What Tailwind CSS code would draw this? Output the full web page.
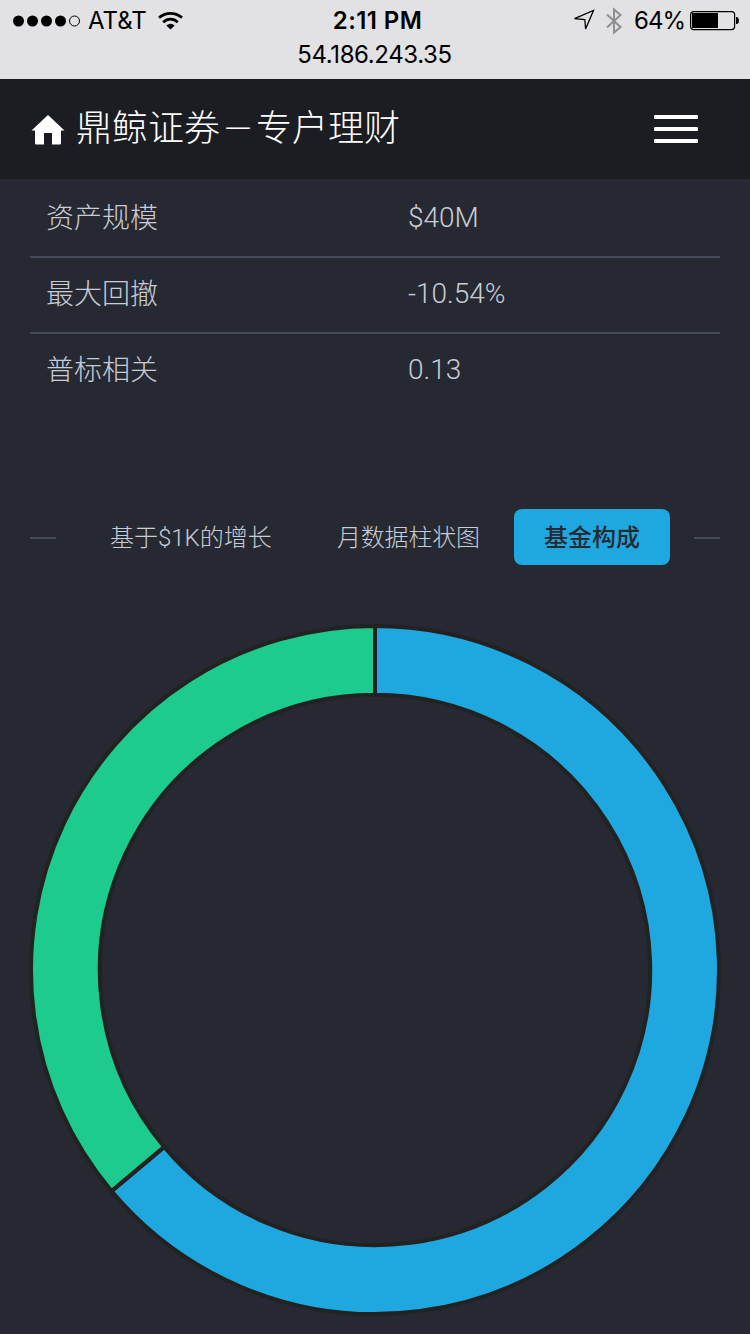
<!DOCTYPE html>
<html lang="zh-CN">
<head>
<meta charset="utf-8">
<title>鼎鲸证券－专户理财</title>
<script src="https://cdn.jsdelivr.net/npm/@tailwindcss/browser@4"></script>
</head>
<body class="w-[750px] h-[1334px] overflow-hidden bg-[#262932] font-['Roboto','Noto_Sans_CJK_SC',sans-serif] font-light text-[#c8ccd6]">
<div class="h-[79px] bg-[#e2e2e4] text-black font-['Inter',sans-serif] font-normal text-[24px]">
  <div class="grid grid-cols-[1fr_auto_1fr] items-center h-[41px] pl-[13px] pr-[11px]">
    <div class="flex items-center">
      <svg class="mr-[7px]" width="68" height="12" viewBox="0 0 68 12"><circle cx="5.5" cy="6" r="5.5"/><circle cx="19.5" cy="6" r="5.5"/><circle cx="33.5" cy="6" r="5.5"/><circle cx="47.5" cy="6" r="5.5"/><circle cx="61.5" cy="6" r="5" fill="none" stroke="#000"/></svg>
      <span class="w-[58px] pt-px leading-10 whitespace-nowrap">AT&amp;T</span>
      <svg class="ml-3" width="26" height="18" viewBox="0 0 26 18" fill="none" stroke="#000" stroke-width="2.8"><path d="M1 5.6Q6.500 1.400 12.500 1.400T24 5.600"/><path d="M5.200 10.200Q8.500 7.200 12.500 7.200T19.800 10.200"/><path d="M8.300 13.400Q12.500 10.200 16.700 13.400L12.500 17.600Z" fill="#000" stroke="none"/></svg>
    </div>
    <div class="font-semibold pt-px pl-[3px] leading-10 tracking-[0.4px] whitespace-nowrap">2:11 PM</div>
    <div class="flex items-center justify-end">
      <svg class="mb-[2px]" width="22" height="22" viewBox="0 0 22 22" fill="none" stroke="#000" stroke-width="1.300"><path d="M.5 9.600L19.500 1.500L11.600 20L10.800 10.500Z"/></svg>
      <svg class="ml-[9px]" width="18" height="28" viewBox="0 0 18 28" fill="none" stroke="#8f8f91" stroke-width="2"><path d="M2 7.500L15.500 20L9 25.500V2.500L15.500 8L2 20.500"/></svg>
      <span class="ml-[11px] w-[51px] pt-px leading-10 tracking-[-1px] whitespace-nowrap">64%</span>
      <svg class="ml-[5px]" width="49" height="20" viewBox="0 0 49 20"><rect x=".6" y=".6" width="44" height="18" rx="3" fill="none" stroke="#000" stroke-width="1.200"/><path d="M2 2H28V17H2Z"/><path d="M46 6H47Q49 6.500 49 9.500T47 13H46Z"/></svg>
    </div>
  </div>
  <div class="text-center leading-[28px] tracking-[-0.4px] pr-px">54.186.243.35</div>
</div>
<header class="h-[100px] bg-[#1c1d22] flex items-center justify-between pl-[31px] pr-[52px] text-white">
  <div class="flex items-center">
    <svg class="mt-px mr-[11px]" width="34" height="30" viewBox="0 0 34 30" fill="#fff"><path d="M17 0L33.500 15.500H30V28Q30 29.500 28.500 29.500H21V18H13V29.500H5.500Q4 29.500 4 28V15.500H.5Z"/></svg>
    <span class="flex text-[36px] leading-[52px] whitespace-nowrap">鼎鲸证券<span class="w-9 text-center text-[32px]">－</span>专户理财</span>
  </div>
  <div class="flex flex-col gap-2 w-11"><i class="h-1 bg-white rounded-[1px]"></i><i class="h-1 bg-white rounded-[1px]"></i><i class="h-1 bg-white rounded-[1px]"></i></div>
</header>
<main class="px-[30px]">
  <div class="text-[28px]">
    <div class="grid grid-cols-[362px_1fr] h-[79px] pl-4 items-center border-b-2 border-[#454958]"><span class="pt-[3px]">资产规模</span><span class="pt-px">$40M</span></div>
    <div class="grid grid-cols-[362px_1fr] h-[76px] pl-4 pb-[3px] items-center border-b-2 border-[#454958]"><span class="pt-[2px]">最大回撤</span><span>-10.54%</span></div>
    <div class="grid grid-cols-[362px_1fr] h-[74px] pl-4 pb-[3px] items-center"><span class="pt-[2px]">普标相关</span><span>0.13</span></div>
  </div>
  <div class="mt-[101px] h-14 flex items-center text-[24px] whitespace-nowrap">
    <i class="w-[26px] h-0.5 mt-[2px] bg-[#454958]"></i>
    <span class="ml-[54px] w-[162px] pt-px">基于$1K的增长</span>
    <span class="ml-[65px] w-[143px] pt-px tracking-[-0.2px]">月数据柱状图</span>
    <span class="ml-[34px] w-[156px] h-14 pt-px rounded-lg bg-[#1fa8df] text-[#262932] font-medium flex items-center justify-center">基金构成</span>
    <i class="ml-6 w-[26px] h-0.5 mt-[2px] bg-[#454958]"></i>
  </div>
</main>
<svg class="block mt-[55px]" width="750" height="714" viewBox="0 620 750 714" stroke="#222" stroke-width="4">
  <path fill="#1fa8df" d="M375 626A344 344 0 1 1 111.480 1191.120L164.180 1146.900A275.200 275.200 0 1 0 375 694.800Z"/>
  <path fill="#1dcb8f" d="M111.480 1191.120A344 344 0 0 1 375 626V694.800A275.200 275.200 0 0 0 164.180 1146.900Z"/>
</svg>
</body>
</html>
